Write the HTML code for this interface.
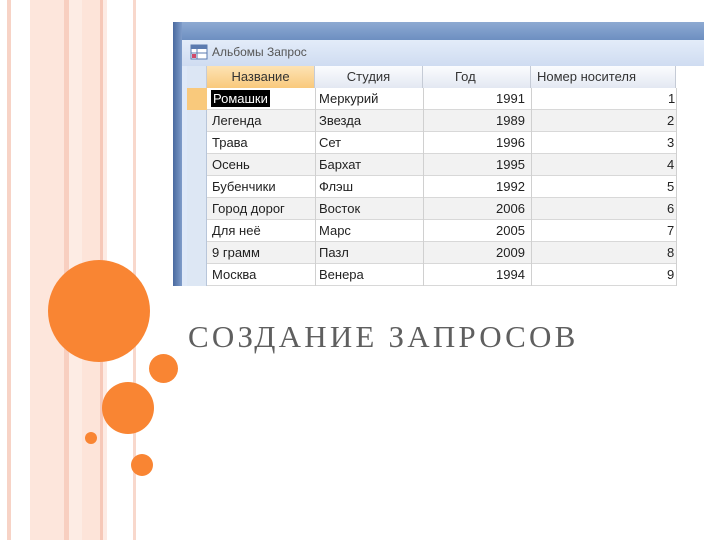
<!DOCTYPE html>
<html><head><meta charset="utf-8"><style>
*{margin:0;padding:0;box-sizing:border-box}
body{width:720px;height:540px;position:relative;background:#fff;overflow:hidden;font-family:"Liberation Sans","DejaVu Sans",sans-serif}
.s{position:absolute;top:0;height:540px}
.c{position:absolute;border-radius:50%;background:#f98533}
.win{position:absolute;left:173px;top:22px;width:531px;height:264px;background:linear-gradient(#8eaad2,#6d8fc1 18px,#dfe9f8 19px);}
.lb{position:absolute;left:173px;top:22px;width:9px;height:264px;background:linear-gradient(90deg,#4a6aa0,#7f9cc9)}
.title{position:absolute;left:182px;top:40px;width:522px;height:26px;background:linear-gradient(#e3ecf9,#cfdcf1);font-size:12px;color:#555;padding:5px 0 0 30px}
.grid{position:absolute;left:187px;top:66px;width:517px;height:220px;background:#fff}
.hd{position:absolute;top:0;height:22px;background:linear-gradient(#fbfcfe,#e3e8f2);border-right:1px solid #c5cbd6;font-size:13px;color:#333;padding-top:3px}
.r{position:absolute;left:20px;width:469px;height:22px;border-bottom:1px solid #d8d8d8;font-size:13px;color:#222}
.r span{position:absolute;top:3px}
.v{position:absolute;top:22px;width:1px;height:198px;background:#d0d0d0}
</style></head><body>
<div class="s" style="left:7px;width:4px;background:#f7d3c6"></div>
<div class="s" style="left:30px;width:36px;background:#fde6dc"></div>
<div class="s" style="left:64px;width:5px;background:#f8cfc0"></div>
<div class="s" style="left:69px;width:13px;background:#fdece4"></div>
<div class="s" style="left:82px;width:18px;background:#fde4d9"></div>
<div class="s" style="left:100px;width:3px;background:#f6c8b8"></div>
<div class="s" style="left:103px;width:4px;background:#fdebe4"></div>
<div class="s" style="left:133px;width:3px;background:#f8d8cc"></div>

<div class="win"></div>
<div class="lb"></div>
<div class="title">
<svg style="position:absolute;left:8px;top:4px" width="18" height="16"><rect x="1" y="1" width="16" height="14" fill="#fff" stroke="#5b7bb0"/><rect x="1" y="1" width="16" height="4" fill="#5b7bb0"/><line x1="1" y1="9" x2="17" y2="9" stroke="#5b7bb0"/><line x1="7" y1="5" x2="7" y2="15" stroke="#5b7bb0"/><rect x="2" y="10" width="4" height="4" fill="#d04a6a"/></svg>
Альбомы Запрос</div>
<div class="grid">
<div class="hd" style="left:0;width:20px;background:#dce6f4"></div>
<div class="hd" style="left:20px;width:108px;background:linear-gradient(#fde3b4,#f9c97c);text-align:center">Название</div>
<div class="hd" style="left:128px;width:108px;text-align:center">Студия</div>
<div class="hd" style="left:236px;width:108px;padding-left:32px">Год</div>
<div class="hd" style="left:344px;width:145px;padding-left:6px">Номер носителя</div>
<div style="position:absolute;left:0;top:22px;width:20px;height:198px;background:#dde7f4;border-right:1px solid #b8c6da"></div>
<div style="position:absolute;left:0;top:22px;width:20px;height:22px;background:#f9c97c"></div>

<div class="r" style="top:22px;background:#fff"><span style="left:4px;top:2px;background:#000;color:#fff;padding:1px 2px">Ромашки</span><span style="left:112px">Меркурий</span><span style="left:289px">1991</span><span style="left:461px">1</span></div>
<div class="r" style="top:44px;background:#f2f2f2"><span style="left:5px">Легенда</span><span style="left:112px">Звезда</span><span style="left:289px">1989</span><span style="left:460px">2</span></div>
<div class="r" style="top:66px;background:#fff"><span style="left:5px">Трава</span><span style="left:112px">Сет</span><span style="left:289px">1996</span><span style="left:460px">3</span></div>
<div class="r" style="top:88px;background:#f2f2f2"><span style="left:5px">Осень</span><span style="left:112px">Бархат</span><span style="left:289px">1995</span><span style="left:460px">4</span></div>
<div class="r" style="top:110px;background:#fff"><span style="left:5px">Бубенчики</span><span style="left:112px">Флэш</span><span style="left:289px">1992</span><span style="left:460px">5</span></div>
<div class="r" style="top:132px;background:#f2f2f2"><span style="left:5px">Город дорог</span><span style="left:112px">Восток</span><span style="left:289px">2006</span><span style="left:460px">6</span></div>
<div class="r" style="top:154px;background:#fff"><span style="left:5px">Для неё</span><span style="left:112px">Марс</span><span style="left:289px">2005</span><span style="left:460px">7</span></div>
<div class="r" style="top:176px;background:#f2f2f2"><span style="left:5px">9 грамм</span><span style="left:112px">Пазл</span><span style="left:289px">2009</span><span style="left:460px">8</span></div>
<div class="r" style="top:198px;background:#fff"><span style="left:5px">Москва</span><span style="left:112px">Венера</span><span style="left:289px">1994</span><span style="left:460px">9</span></div>
<div class="v" style="left:128px"></div><div class="v" style="left:236px"></div><div class="v" style="left:344px"></div><div class="v" style="left:489px"></div>
</div>

<div class="c" style="left:48px;top:260px;width:102px;height:102px"></div>
<div class="c" style="left:149px;top:354px;width:29px;height:29px"></div>
<div class="c" style="left:102px;top:382px;width:52px;height:52px"></div>
<div class="c" style="left:85px;top:432px;width:12px;height:12px"></div>
<div class="c" style="left:131px;top:454px;width:22px;height:22px"></div>

<div style="position:absolute;left:188px;top:319px;font-family:'Liberation Serif',serif;font-size:31px;color:#5f5f5f;letter-spacing:3.2px;white-space:nowrap">СОЗДАНИЕ ЗАПРОСОВ</div>
</body></html>
